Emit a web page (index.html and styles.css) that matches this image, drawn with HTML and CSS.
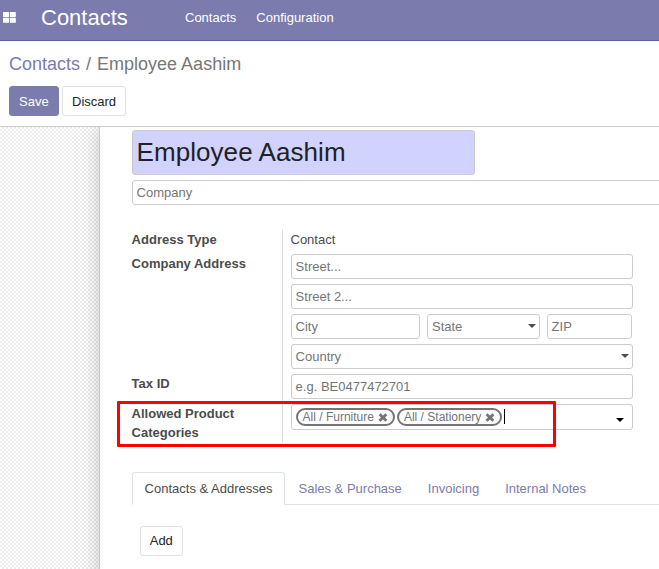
FILE: index.html
```html
<!DOCTYPE html>
<html lang="en">
<head>
<meta charset="utf-8">
<title>Contacts</title>
<link rel="stylesheet" href="styles.css">
</head>
<body>
<header class="navbar">
  <svg class="apps" width="13" height="11" viewBox="0 0 13 11"><g fill="#fff"><rect width="6" height="5" rx=".6"/><rect x="6.8" width="6" height="5" rx=".6"/><rect y="5.8" width="6" height="5" rx=".6"/><rect x="6.8" y="5.8" width="6" height="5" rx=".6"/></g></svg>
  <span class="brand">Contacts</span>
  <nav class="menu"><a>Contacts</a><a>Configuration</a></nav>
</header>
<section class="control">
  <div class="crumbs"><a>Contacts</a><span class="slash">/</span><span>Employee Aashim</span></div>
  <div class="buttons"><button class="btn primary">Save</button><button class="btn discard">Discard</button></div>
</section>
<main class="content">
  <div class="sheet">
    <div class="name">Employee Aashim</div>
    <div class="field company">Company</div>
    <div class="group">
      <div class="label">Address Type</div><div class="cell value">Contact</div>
      <div class="label">Company Address</div>
      <div class="cell address">
        <div class="field">Street...</div>
        <div class="field">Street 2...</div>
        <div class="row">
          <div class="field city">City</div>
          <div class="field state">State<svg class="caret" width="8" height="4" viewBox="0 0 8 4"><path d="M0 0H8L4 4Z"/></svg></div>
          <div class="field zip">ZIP</div>
        </div>
        <div class="field">Country<svg class="caret" width="8" height="4" viewBox="0 0 8 4"><path d="M0 0H8L4 4Z"/></svg></div>
      </div>
      <div class="label">Tax ID</div><div class="cell tax"><div class="field">e.g. BE0477472701</div></div>
      <div class="label">Allowed Product Categories</div>
      <div class="cell categories">
        <div class="field tags">
          <span class="tag">All / Furniture<svg class="x" width="10" height="9" viewBox="0 0 10 9"><path d="M1.6 1.2 8.4 7.8M8.4 1.2 1.6 7.8"/></svg></span>
          <span class="tag">All / Stationery<svg class="x" width="10" height="9" viewBox="0 0 10 9"><path d="M1.6 1.2 8.4 7.8M8.4 1.2 1.6 7.8"/></svg></span>
          <span class="cursor"></span><svg class="caret dark" width="8" height="4" viewBox="0 0 8 4"><path d="M0 0H8L4 4Z"/></svg>
        </div>
      </div>
      <div class="highlight"></div>
    </div>
    <div class="tabs"><a class="tab active">Contacts &amp; Addresses</a><a class="tab">Sales &amp; Purchase</a><a class="tab">Invoicing</a><a class="tab">Internal Notes</a></div>
    <div class="pane"><button class="btn">Add</button></div>
  </div>
</main>
</body>
</html>
```
FILE: styles.css
```css
* { box-sizing: border-box; }
body { margin: 0; height: 569px; overflow: hidden; display: flex; flex-direction: column; background: #fff; color: #4c4c4c; font: 13px/19px "Liberation Sans", Arial, sans-serif; }
.navbar { height: 41px; flex: none; display: flex; background: #7c7bad; border-bottom: 1px solid #5f5e97; color: #fff; padding-left: 3px; }
.apps { margin-top: 12px; }
.brand { width: 144px; margin-left: 25px; font-size: 22px; line-height: 36px; }
.menu { display: flex; gap: 20px; line-height: 35px; }
.control { height: 86px; flex: none; padding: 11px 9px 0; border-bottom: 1px solid #ccc; }
.crumbs { font-size: 18px; line-height: 24px; color: #777; white-space: nowrap; }
.crumbs a, .tab { color: #7c7bad; }
.slash { margin: 0 6px; }
.buttons { display: flex; gap: 3px; margin-top: 10px; }
.btn { height: 30px; padding: 0 9px; border: 1px solid #dee2e6; border-radius: 3px; background: #fff; color: #212529; font: inherit; }
.primary { background: #7c7bad; border-color: #7c7bad; color: #fff; }
.discard { padding-left: 9.4px; }
.content { flex: 1; min-height: 0; padding-left: 99px; overflow: hidden; background: repeating-conic-gradient(#ebebeb 0 25%, #fff 0 50%) 0 0 / 4px 4px; }
.sheet { height: 600px; width: 700px; padding: 3px 32px 0; background: #fff; border-left: 1px solid #c8c8d3; box-shadow: 0 0 20px rgba(0, 0, 0, .2); }
.name { width: 343px; height: 45px; padding: 0 3.5px; border: 1px solid #ccc; border-radius: 3px; background: #d2d2ff; color: #212121; font-size: 26px; letter-spacing: .07px; line-height: 43px; }
.field { position: relative; height: 25px; padding: 0 3.6px; border: 1px solid #ccc; border-radius: 3px; line-height: 23px; color: #757575; background: #fff; white-space: nowrap; }
.company { margin-top: 5px; }
.group { position: relative; width: 501px; margin-top: 25px; display: grid; grid-template-columns: 150px 351px; grid-template-rows: 24px 120px 30px 38px; }
.label { font-weight: bold; width: 135px; margin-left: -.4px; }
.cell { border-left: 1px solid #ddd; padding-left: 8px; }
.value { padding-left: 7.5px; }
.address { display: flex; flex-direction: column; gap: 5px; }
.row { display: flex; }
.city { width: 129px; }
.state { width: 113px; margin: 0 7px; padding-left: 4px; }
.zip { width: 85px; }
.caret { position: absolute; right: 3px; top: 9px; fill: #4c4c4c; }
.dark { right: 8px; top: 13px; fill: #000; }
.tags { height: 26px; display: flex; align-items: flex-start; padding-top: 3px; gap: 2px; }
.tag { height: 18px; border: 2px solid #757575; border-radius: 9px; padding: 0 5px; font-size: 12px; line-height: 14px; }
.x { margin-left: 4px; vertical-align: -1px; stroke: #757575; stroke-width: 2.8; }
.cursor { width: 1px; height: 15px; margin-top: 1px; background: #000; }
.highlight { position: absolute; left: -15px; top: 171px; width: 439px; height: 46px; border: 3px solid #f00; border-radius: 1px; }
.tabs { display: flex; width: 570px; height: 33px; margin-top: 30px; border-bottom: 1px solid #dee2e6; }
.tab { height: 33px; padding: 0 13px; line-height: 33px; white-space: nowrap; }
.active { padding: 0 11.6px; margin-right: .4px; line-height: 31px; color: #4c4c4c; background: #fff; border: 1px solid #dee2e6; border-bottom-color: #fff; border-radius: 3px 3px 0 0; }
.pane { padding: 21px 8px; }
.pane .btn { display: block; width: 43px; padding: 0 9px 1px 8.6px; }
```
